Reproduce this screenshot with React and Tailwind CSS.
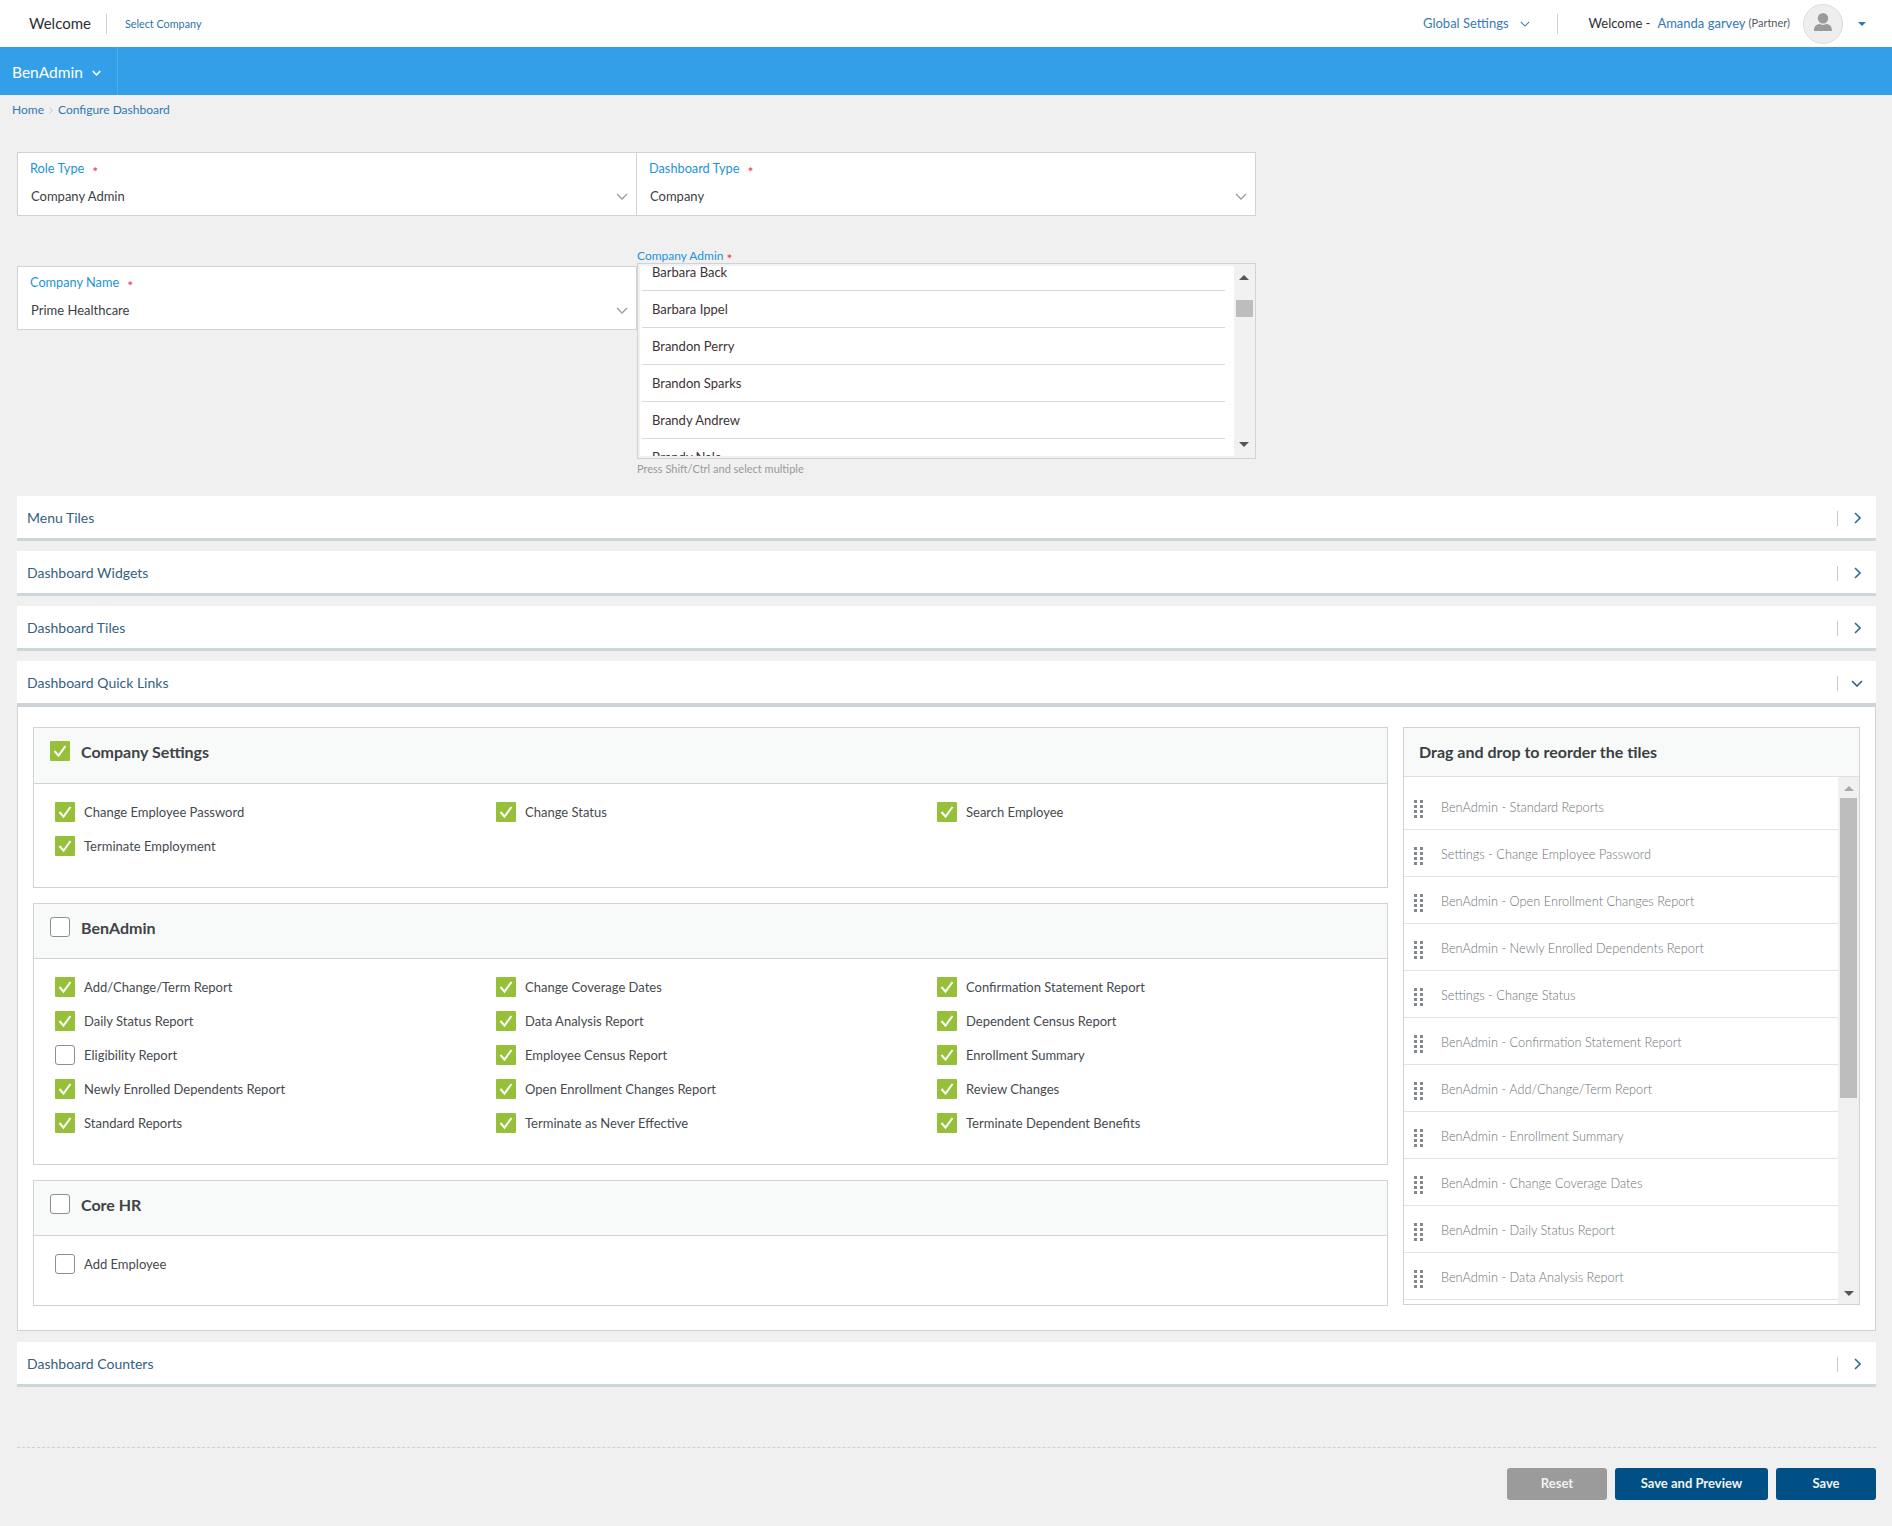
import React from 'react';

const FONT = "[font-family:Lato,'Open_Sans',sans-serif]";

function Chevron({ dir = 'down', className = '', sw = 1.3 }) {
  const d = dir === 'down' ? 'M1 1l5 5 5-5' : 'M1 1l5 5-5 5';
  const box = dir === 'down' ? '0 0 12 7' : '0 0 7 12';
  return (
    <svg viewBox={box} className={className} fill="none" stroke="currentColor" strokeWidth={sw}>
      <path d={d} />
    </svg>
  );
}

function Check({ checked }) {
  if (!checked) {
    return <span className="block w-5 h-5 shrink-0 bg-white border border-[#8a9096] rounded-[3px]" />;
  }
  return (
    <span className="flex items-center justify-center w-5 h-5 shrink-0 bg-[#97c03a] rounded-[1px]">
      <svg viewBox="0 0 20 20" className="w-5 h-5" fill="none" stroke="#fff" strokeWidth="2">
        <path d="M4.500 10l4 4.700 7-9.700" />
      </svg>
    </span>
  );
}

function Star({ className = '' }) {
  return <span className={`inline-block translate-y-[3px] text-[14px] leading-none text-[#f0304a] ${className}`}>*</span>;
}

function SelectCard({ label, value, className = '' }) {
  return (
    <div className={`relative h-[64px] bg-white border border-[#d2d2d2] pl-[13px] pt-[6px] ${className}`}>
      <div className="flex items-center h-[20px] -ml-[1px] text-[12.75px] text-[#1e92d8]">
        {label}
        <Star className="ml-[8px]" />
      </div>
      <div className="mt-[7px] text-[13px] leading-[20px] text-[#3b3f44]">{value}</div>
      <Chevron className="absolute right-[8px] top-[40px] w-[12px] h-[7px] text-[#9a9a9a]" />
    </div>
  );
}

function AccBar({ title, open }) {
  return (
    <div
      className={`flex items-center justify-between bg-white pl-[10px] pr-[13px] ${
        open ? 'h-[46px] border-b-4 border-[#cdd3d6]' : 'h-[45px] border-b-[3px] border-[#cdd6d8]'
      }`}
    >
      <span className="text-[14px] text-[#35617f]">{title}</span>
      <span className="flex items-center mt-[2px]">
        <span className="block w-px h-[15px] bg-[#c8c8c8] mr-[13px]" />
        <span className="flex justify-center w-[12px]">
          {open ? (
            <Chevron className="w-[12px] h-[7px] text-[#2f5f85]" sw={1.6} />
          ) : (
            <Chevron dir="right" className="w-[7px] h-[12px] text-[#2f6f9f]" sw={1.6} />
          )}
        </span>
      </span>
    </div>
  );
}

function Section({ title, checked, headH, bodyH, items }) {
  return (
    <div className="bg-white border border-[#d2d2d2]">
      <div
        className="flex items-start bg-[#f8f9f9] border-b border-[#d2d2d2] pl-[16px] pt-[13px]"
        style={{ height: headH }}
      >
        <Check checked={checked} />
        <span className="ml-[11px] mt-[1px] text-[16px] leading-[20px] font-bold text-[#3f4347]">{title}</span>
      </div>
      <div className="grid grid-cols-[441px_441px_441px] pl-[21px] pt-[18px] auto-rows-[34px]" style={{ height: bodyH }}>
        {items.map(([t, c]) => (
          <div key={t} className="flex items-start">
            <Check checked={c} />
            <span className="ml-[9px] text-[13px] leading-[20px] text-[#464a4e]">{t}</span>
          </div>
        ))}
      </div>
    </div>
  );
}

const tiles = [
  'BenAdmin - Standard Reports',
  'Settings - Change Employee Password',
  'BenAdmin - Open Enrollment Changes Report',
  'BenAdmin - Newly Enrolled Dependents Report',
  'Settings - Change Status',
  'BenAdmin - Confirmation Statement Report',
  'BenAdmin - Add/Change/Term Report',
  'BenAdmin - Enrollment Summary',
  'BenAdmin - Change Coverage Dates',
  'BenAdmin - Daily Status Report',
  'BenAdmin - Data Analysis Report',
];

const admins = ['Barbara Back', 'Barbara Ippel', 'Brandon Perry', 'Brandon Sparks', 'Brandy Andrew', 'Brandy Nale'];

function Grip() {
  return (
    <span className="grid grid-cols-2 gap-x-[3px] gap-y-[2px] w-[9px] shrink-0 mt-[1px]">
      {[0, 1, 2, 3, 4, 5, 6, 7].map((i) => (
        <span key={i} className="block w-[3px] h-[3px] bg-[#83888d]" />
      ))}
    </span>
  );
}

export default function App() {
  return (
    <div className={`w-[1892px] h-[1526px] overflow-hidden bg-[#f0f0f0] ${FONT}`}>
      {/* top header */}
      <header className="flex items-center h-[47px] bg-white">
        <span className="ml-[29px] text-[15px] text-[#2c3034]">Welcome</span>
        <span className="block w-px h-[20px] bg-[#cfcfcf] ml-[15px]" />
        <span className="ml-[18px] mt-[2px] text-[10.8px] text-[#2f72a8]">Select Company</span>
        <span className="ml-auto text-[13px] text-[#3b7ab5]">Global Settings</span>
        <Chevron className="ml-[11px] w-[10px] h-[6px] text-[#3b7ab5]" />
        <span className="block w-px h-[20px] bg-[#cfcfcf] ml-[27px]" />
        <span className="ml-[31px] text-[13px] text-[#2c3034]">Welcome -</span>
        <span className="ml-[7px] text-[13px] text-[#2f78b5]">Amanda garvey</span>
        <span className="ml-[3px] text-[11px] text-[#555a5f]">(Partner)</span>
        <span className="flex items-center justify-center ml-[13px] w-[40px] h-[40px] pb-[4px] rounded-full bg-[#eeeeee] border border-[#dddddd]">
          <svg viewBox="0 0 18 18" className="w-[18px] h-[18px]" fill="#9a9a9a">
            <ellipse cx="9" cy="5.200" rx="5.200" ry="5.200" />
            <path d="M0 18C0 13.500 2 11.800 5.500 10.800C7 12.300 11 12.300 12.500 10.800C16 11.800 18 13.500 18 18Z" />
          </svg>
        </span>
        <span className="ml-[15px] mr-[26px] w-0 h-0 border-x-[4px] border-x-transparent border-t-[4px] border-t-[#2f78b5]" />
      </header>

      {/* blue nav */}
      <nav className="flex h-[48px] bg-[#329fe8]">
        <div className="flex items-center w-[118px] pl-[12px] pt-[3px] border-r border-[#4aaaea]">
          <span className="text-[15.5px] text-white">BenAdmin</span>
          <Chevron className="ml-[9px] w-[9px] h-[6px] text-white" sw={2} />
        </div>
      </nav>

      {/* breadcrumb */}
      <div className="flex items-center h-[30px] pl-[12px] text-[12px] text-[#2f78b5]">
        <span>Home</span>
        <Chevron dir="right" className="mx-[5px] w-[4px] h-[7px] text-[#b5b5b5]" />
        <span>Configure Dashboard</span>
      </div>

      <main className="px-[16px]">
        {/* form */}
        <div className="h-[371px] pt-[27px] pl-[1px]">
          <div className="flex">
            <SelectCard label="Role Type" value="Company Admin" className="w-[620px]" />
            <SelectCard label="Dashboard Type" value="Company" className="w-[620px] -ml-px" />
          </div>
          <div className="flex mt-[33px]">
            <div className="w-[620px] mt-[17px]">
              <SelectCard label="Company Name" value="Prime Healthcare" />
            </div>
            <div className="w-[619px] -mt-[1px]">
              <div className="flex items-center h-[15px] text-[12px] leading-[15px] text-[#1e92d8]">
                Company Admin
                <Star className="ml-[3px]" />
              </div>
              <div className="flex h-[196px] bg-[#f1f1f1] border border-[#d2d2d2] p-[2px] pr-[1px]">
                <div className="flex-1 h-full overflow-hidden bg-white pl-[2px]">
                  <div className="-mt-[12px]">
                    {admins.map((n) => (
                      <div key={n} className="flex items-center w-[583px] h-[37px] pt-[2px] border-b border-[#d8d8d8] pl-[10px] text-[13px] text-[#3e3236]">
                        {n}
                      </div>
                    ))}
                  </div>
                </div>
                <div className="flex flex-col items-center w-[20px] shrink-0 pt-[9px]">
                  <span className="w-0 h-0 border-x-[5px] border-x-transparent border-b-[5px] border-b-[#555555]" />
                  <span className="block w-[17px] h-[17px] bg-[#bdbdbd] mt-[20px]" />
                  <span className="mt-auto mb-[9px] w-0 h-0 border-x-[5px] border-x-transparent border-t-[5px] border-t-[#555555]" />
                </div>
              </div>
              <div className="mt-[3px] text-[11px] leading-[14px] text-[#9a9a9a]">Press Shift/Ctrl and select multiple</div>
            </div>
          </div>
        </div>

        {/* accordions */}
        <div className="flex flex-col pl-[1px] w-[1860px]">
          <AccBar title="Menu Tiles" />
          <div className="h-[10px]" />
          <AccBar title="Dashboard Widgets" />
          <div className="h-[10px]" />
          <AccBar title="Dashboard Tiles" />
          <div className="h-[10px]" />
          <AccBar title="Dashboard Quick Links" open />

          <div className="flex items-start h-[624px] bg-white border border-t-0 border-[#d2d2d2] pt-[20px] pl-[15px]">
            <div className="flex flex-col gap-[15px] w-[1355px]">
              <Section
                title="Company Settings"
                checked
                headH={56}
                bodyH={103}
                items={[
                  ['Change Employee Password', true],
                  ['Change Status', true],
                  ['Search Employee', true],
                  ['Terminate Employment', true],
                ]}
              />
              <Section
                title="BenAdmin"
                headH={55}
                bodyH={205}
                items={[
                  ['Add/Change/Term Report', true],
                  ['Change Coverage Dates', true],
                  ['Confirmation Statement Report', true],
                  ['Daily Status Report', true],
                  ['Data Analysis Report', true],
                  ['Dependent Census Report', true],
                  ['Eligibility Report', false],
                  ['Employee Census Report', true],
                  ['Enrollment Summary', true],
                  ['Newly Enrolled Dependents Report', true],
                  ['Open Enrollment Changes Report', true],
                  ['Review Changes', true],
                  ['Standard Reports', true],
                  ['Terminate as Never Effective', true],
                  ['Terminate Dependent Benefits', true],
                ]}
              />
              <Section
                title="Core HR"
                headH={55}
                bodyH={69}
                items={[['Add Employee', false]]}
              />
            </div>

            <div className="flex flex-col w-[457px] h-[578px] ml-[15px] bg-white border border-[#d2d2d2]">
              <div className="flex items-center h-[49px] shrink-0 bg-[#f8f9f9] border-b border-[#e0e0e0] pl-[15px] text-[16px] font-bold text-[#3a3f44]">
                Drag and drop to reorder the tiles
              </div>
              <div className="flex flex-1 min-h-0">
                <div className="flex-1 overflow-hidden">
                  {tiles.map((t) => (
                    <div key={t} className="flex items-center h-[47px] pt-[4px] border-b border-[#e2e2e2] pl-[10px] first:h-[53px] first:pt-[10px]">
                      <Grip />
                      <span className="ml-[18px] text-[12.75px] font-light text-[#6e7378]">{t}</span>
                    </div>
                  ))}
                </div>
                <div className="flex flex-col items-center w-[21px] shrink-0 bg-[#f0f0f0] pt-[9px]">
                  <span className="w-0 h-0 border-x-[5px] border-x-transparent border-b-[5px] border-b-[#a8a8a8]" />
                  <span className="block w-[17px] h-[300px] bg-[#bdbdbd] mt-[7px]" />
                  <span className="mt-auto mb-[8px] w-0 h-0 border-x-[5px] border-x-transparent border-t-[5px] border-t-[#555555]" />
                </div>
              </div>
            </div>
          </div>

          <div className="h-[11px]" />
          <AccBar title="Dashboard Counters" />

          <div className="mt-[60px] border-t border-dashed border-[#cfcfcf]" />
          <div className="flex justify-end gap-[8px] mt-[20px]">
            <button className="w-[100px] h-[32px] rounded-[3px] bg-[#9b9b9b] text-[13px] font-bold text-[#f2f2f2]">Reset</button>
            <button className="w-[153px] h-[32px] rounded-[3px] bg-[#005085] text-[13px] font-bold text-[#f2f2f2]">Save and Preview</button>
            <button className="w-[100px] h-[32px] rounded-[3px] bg-[#005085] text-[13px] font-bold text-[#f2f2f2]">Save</button>
          </div>
        </div>
      </main>
    </div>
  );
}
